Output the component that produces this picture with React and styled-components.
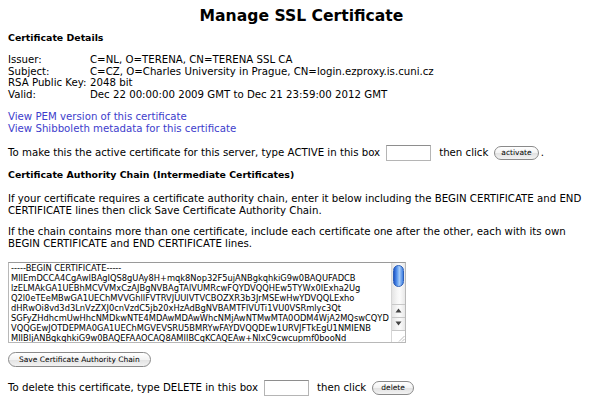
import React from 'react';
import styled, { createGlobalStyle } from 'styled-components';

const GlobalStyle = createGlobalStyle`
  html, body { margin: 0; padding: 0; background: #fff; }
  body {
    font-family: "DejaVu Sans", Verdana, sans-serif;
    font-size: 10.2px;
    color: #000;
  }
`;

const Page = styled.div`
  width: 603px;
  height: 399px;
  overflow: hidden;
  box-sizing: border-box;
  padding: 6px 8px 0;
  display: flex;
  flex-direction: column;
`;

const Title = styled.h1`
  margin: 0;
  text-align: center;
  font-size: 15.6px;
  line-height: 20px;
  font-weight: bold;
`;

const Heading = styled.h2`
  margin: ${p => p.$top}px 0 0;
  font-size: 9.4px;
  line-height: 12px;
  font-weight: bold;
`;

const Details = styled.div`
  margin-top: 10px;
  display: grid;
  grid-template-columns: 82px auto;
  line-height: 11.7px;
  white-space: nowrap;
`;

const LinkList = styled.div`
  margin-top: 10px;
  display: flex;
  flex-direction: column;
  align-items: flex-start;
  line-height: 12px;
`;

const Link = styled.a`
  color: #3d3dcc;
  text-decoration: none;
`;

const ActionRow = styled.div`
  margin-top: ${p => p.$top}px;
  display: flex;
  align-items: center;
  height: 16px;
  white-space: nowrap;
`;

const TextBox = styled.input`
  box-sizing: border-box;
  width: 45px;
  height: 16px;
  margin: 0 8px 0 6px;
  padding: 0 2px;
  border: 1px solid #b5b5b5;
  border-top-color: #8e8e8e;
  background: #fff;
  font: inherit;
`;

const PillButton = styled.button`
  box-sizing: border-box;
  height: ${p => p.$h || 14}px;
  margin: 0 ${p => p.$after || 0}px 0 ${p => p.$before || 0}px;
  padding: 0 ${p => p.$pad || 6}px;
  border: 1px solid #8a8a8a;
  border-radius: 8px;
  background: linear-gradient(#ffffff 0%, #f3f3f3 50%, #e2e2e2 51%, #f2f2f2 100%);
  font-family: "DejaVu Sans", "Lucida Grande", sans-serif;
  font-size: 7.5px;
  line-height: 12px;
  color: #000;
  cursor: pointer;
`;

const Para = styled.p`
  margin: ${p => p.$top}px 0 0;
  line-height: ${p => p.$lh || 12}px;
`;

const ChainBox = styled.div`
  margin-top: 11px;
  width: 398px;
  height: 81px;
  box-sizing: border-box;
  border: 1px solid #b8b8b8;
  border-top-color: #9a9a9a;
  display: flex;
  background: #fff;
`;

const ChainText = styled.textarea`
  flex: 1;
  border: none;
  outline: none;
  resize: none;
  overflow: hidden;
  padding: 0 2px;
  margin: 0;
  font-family: "DejaVu Sans", "Lucida Grande", sans-serif;
  font-size: 8.3px;
  line-height: 10px;
  white-space: pre;
  color: #000;
  background: #fff;
`;

const Scrollbar = styled.div`
  width: 13px;
  display: flex;
  flex-direction: column;
  border-left: 1px solid #d6d6d6;
  background: linear-gradient(90deg, #e4e4e4, #f6f6f6 40%, #fbfbfb 60%, #e8e8e8);
`;

const Track = styled.div`
  flex: 1;
  padding: 2px 1px;
  display: flex;
  flex-direction: column;
`;

const Thumb = styled.div`
  height: 20px;
  border-radius: 6px;
  border: 1px solid #2c5fb8;
  background: linear-gradient(90deg, #1f55c6, #5d9af0 35%, #a8cdf8 60%, #3f7fe2);
`;

const Arrow = styled.div`
  height: 12px;
  border-top: 1px solid #c8c8c8;
  display: flex;
  align-items: center;
  justify-content: center;
`;

const Grip = styled.div`
  height: 11px;
  border-top: 1px solid #c8c8c8;
  display: flex;
  align-items: flex-end;
  justify-content: flex-end;
  background: #fff;
`;

const pem = [
  '-----BEGIN CERTIFICATE-----',
  'MIIEmDCCA4CgAwIBAgIQS8gUAy8H+mqk8Nop32F5ujANBgkqhkiG9w0BAQUFADCB',
  'lzELMAkGA1UEBhMCVVMxCzAJBgNVBAgTAlVUMRcwFQYDVQQHEw5TYWx0IExha2Ug',
  'Q2l0eTEeMBwGA1UEChMVVGhlIFVTRVJUUlVTVCBOZXR3b3JrMSEwHwYDVQQLExho',
  'dHRwOi8vd3d3LnVzZXJ0cnVzdC5jb20xHzAdBgNVBAMTFlVUTi1VU0VSRmlyc3Qt',
  'SGFyZHdhcmUwHhcNMDkwNTE4MDAwMDAwWhcNMjAwNTMwMTA0ODM4WjA2MQswCQYD',
  'VQQGEwJOTDEPMA0GA1UEChMGVEVSRU5BMRYwFAYDVQQDEw1URVJFTkEgU1NMIENB',
  'MIIBIjANBgkqhkiG9w0BAQEFAAOCAQ8AMIIBCgKCAQEAw+NlxC9cwcupmf0booNd',
].join('\n');

const details = [
  ['Issuer:', 'C=NL, O=TERENA, CN=TERENA SSL CA'],
  ['Subject:', 'C=CZ, O=Charles University in Prague, CN=login.ezproxy.is.cuni.cz'],
  ['RSA Public Key:', '2048 bit'],
  ['Valid:', 'Dec 22 00:00:00 2009 GMT to Dec 21 23:59:00 2012 GMT'],
];

export default function App() {
  return (
    <>
      <GlobalStyle />
      <Page>
        <Title>Manage SSL Certificate</Title>
        <Heading $top={6}>Certificate Details</Heading>
        <Details>
          {details.map(([k, v]) => (
            <React.Fragment key={k}>
              <span>{k}</span>
              <span>{v}</span>
            </React.Fragment>
          ))}
        </Details>
        <LinkList>
          <Link href="#">View PEM version of this certificate</Link>
          <Link href="#">View Shibboleth metadata for this certificate</Link>
        </LinkList>
        <ActionRow $top={10}>
          To make this the active certificate for this server, type ACTIVE in this box
          <TextBox type="text" />
          then click
          <PillButton $before={6} $after={2}>activate</PillButton>.
        </ActionRow>
        <Heading $top={8}>Certificate Authority Chain (Intermediate Certificates)</Heading>
        <Para $top={12}>
          If your certificate requires a certificate authority chain, enter it below including the BEGIN CERTIFICATE and END
          CERTIFICATE lines then click Save Certificate Authority Chain.
        </Para>
        <Para $top={9} $lh={12.5}>
          If the chain contains more than one certificate, include each certificate one after the other, each with its own
          BEGIN CERTIFICATE and END CERTIFICATE lines.
        </Para>
        <ChainBox>
          <ChainText readOnly wrap="off" value={pem} />
          <Scrollbar>
            <Track>
              <Thumb />
            </Track>
            <Arrow>
              <svg width="7" height="5" viewBox="0 0 7 5"><path d="M3.5 0.5 L6.5 4.5 L0.5 4.5 Z" fill="#444" /></svg>
            </Arrow>
            <Arrow>
              <svg width="7" height="5" viewBox="0 0 7 5"><path d="M0.5 0.5 L6.5 0.5 L3.5 4.5 Z" fill="#444" /></svg>
            </Arrow>
            <Grip>
              <svg width="8" height="8" viewBox="0 0 8 8">
                <path d="M7.5 2 L2 7.5 M7.5 5 L5 7.5" stroke="#aaa" strokeWidth="0.8" />
              </svg>
            </Grip>
          </Scrollbar>
        </ChainBox>
        <ActionRow $top={9}>
          <PillButton $pad={10} $h={15}>Save Certificate Authority Chain</PillButton>
        </ActionRow>
        <ActionRow $top={12}>
          To delete this certificate, type DELETE in this box
          <TextBox type="text" />
          then click
          <PillButton $before={6} $pad={8}>delete</PillButton>
        </ActionRow>
      </Page>
    </>
  );
}
